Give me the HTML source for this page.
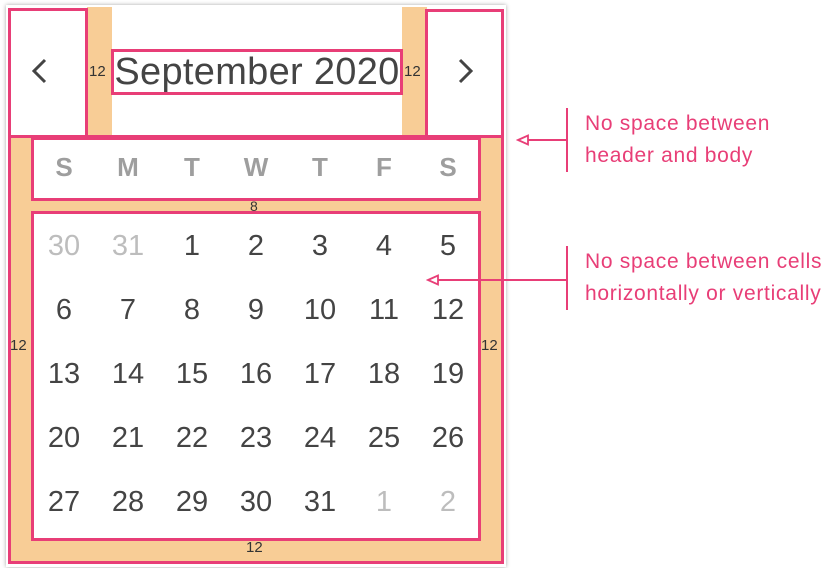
<!DOCTYPE html>
<html><head><style>
*{margin:0;padding:0;box-sizing:border-box}
body{width:836px;height:568px;background:#fff;position:relative;overflow:hidden;font-family:"Liberation Sans",sans-serif}
.a{position:absolute}
.pk{border:3px solid #e83e77}
.or{background:#f8cd96}
.n{position:absolute;width:64px;text-align:center;font-size:29px;color:#444;line-height:64px}
.g{color:#bdbdbd}
.w{position:absolute;width:64px;text-align:center;font-size:26px;color:#9e9e9e;font-weight:bold;line-height:60px}
.l{position:absolute;font-size:15px;color:#333}
.t{position:absolute;left:585px;font-size:21px;letter-spacing:0.7px;color:#e83e77;line-height:32px;white-space:nowrap}
</style></head><body>
<div class="a" style="left:6px;top:5px;width:500px;height:562px;box-shadow:0 0 4px rgba(0,0,0,.35);background:#fff"></div>
<div class="a or pk" style="left:8px;top:135px;width:496px;height:429px"></div>
<div class="a" style="left:8px;top:7px;width:496px;height:131px;background:#fff"></div>
<div class="a or" style="left:87px;top:7px;width:25px;height:130px"></div>
<div class="a or" style="left:402px;top:7px;width:25px;height:130px"></div>
<div class="a pk" style="left:8px;top:8px;width:80px;height:130px"></div>
<div class="a pk" style="left:425px;top:9px;width:79px;height:129px"></div>
<div class="a pk" style="left:8px;top:135px;width:496px;height:3px;border-width:3px 0 0 0"></div>
<div class="a pk" style="left:111px;top:49px;width:292px;height:46px"></div>
<div class="a" style="left:100px;top:50px;width:314px;text-align:center;font-size:38px;color:#444;line-height:44px;letter-spacing:0.3px;white-space:nowrap">September 2020</div>
<svg class="a" style="left:29px;top:57px" width="22" height="28"><path d="M16 3 L5 14 L16 25" fill="none" stroke="#444" stroke-width="3"/></svg>
<svg class="a" style="left:454px;top:57px" width="22" height="28"><path d="M6 3 L17 14 L6 25" fill="none" stroke="#444" stroke-width="3"/></svg>
<div class="l" style="left:89px;top:63px">12</div>
<div class="l" style="left:404px;top:63px">12</div>
<div class="a pk" style="left:31px;top:137px;width:450px;height:64px;background:#fff"></div>
<div class="w" style="left:32px;top:137px">S</div><div class="w" style="left:96px;top:137px">M</div><div class="w" style="left:160px;top:137px">T</div><div class="w" style="left:224px;top:137px">W</div><div class="w" style="left:288px;top:137px">T</div><div class="w" style="left:352px;top:137px">F</div><div class="w" style="left:416px;top:137px">S</div>
<div class="l" style="left:250px;top:198px;font-size:14px">8</div>
<div class="a pk" style="left:31px;top:211px;width:450px;height:330px;background:#fff"></div>
<div class="l" style="left:10px;top:337px">12</div>
<div class="l" style="left:481px;top:337px">12</div>
<div class="l" style="left:246px;top:539px">12</div>
<div id="d"></div>
<script>
var rows=[["30g","31g",1,2,3,4,5],[6,7,8,9,10,11,12],[13,14,15,16,17,18,19],[20,21,22,23,24,25,26],[27,28,29,30,31,"1g","2g"]];
var h="";
rows.forEach(function(r,i){r.forEach(function(v,j){v=String(v);var g=v.indexOf("g")>0;h+='<div class="n'+(g?' g':'')+'" style="left:'+(32+j*64)+'px;top:'+(214+i*64)+'px">'+v.replace("g","")+'</div>';});});
document.getElementById("d").innerHTML=h;
</script>
<div class="a" style="left:566px;top:108px;width:2px;height:64px;background:#e83e77"></div>
<div class="a" style="left:522px;top:139px;width:45px;height:2px;background:#e83e77"></div>
<svg class="a" style="left:516px;top:133px" width="14" height="14"><path d="M2 7 L12 2.5 L12 11.5 Z" fill="#fff" stroke="#e83e77" stroke-width="1.8"/></svg>
<div class="t" style="top:108px">No space between<br>header and body</div>
<div class="a" style="left:566px;top:246px;width:2px;height:64px;background:#e83e77"></div>
<div class="a" style="left:434px;top:279px;width:133px;height:2px;background:#e83e77"></div>
<svg class="a" style="left:426px;top:273px" width="14" height="14"><path d="M2 7 L12 2.5 L12 11.5 Z" fill="#fff" stroke="#e83e77" stroke-width="1.8"/></svg>
<div class="t" style="top:246px">No space between cells<br>horizontally or vertically</div>
</body></html>
